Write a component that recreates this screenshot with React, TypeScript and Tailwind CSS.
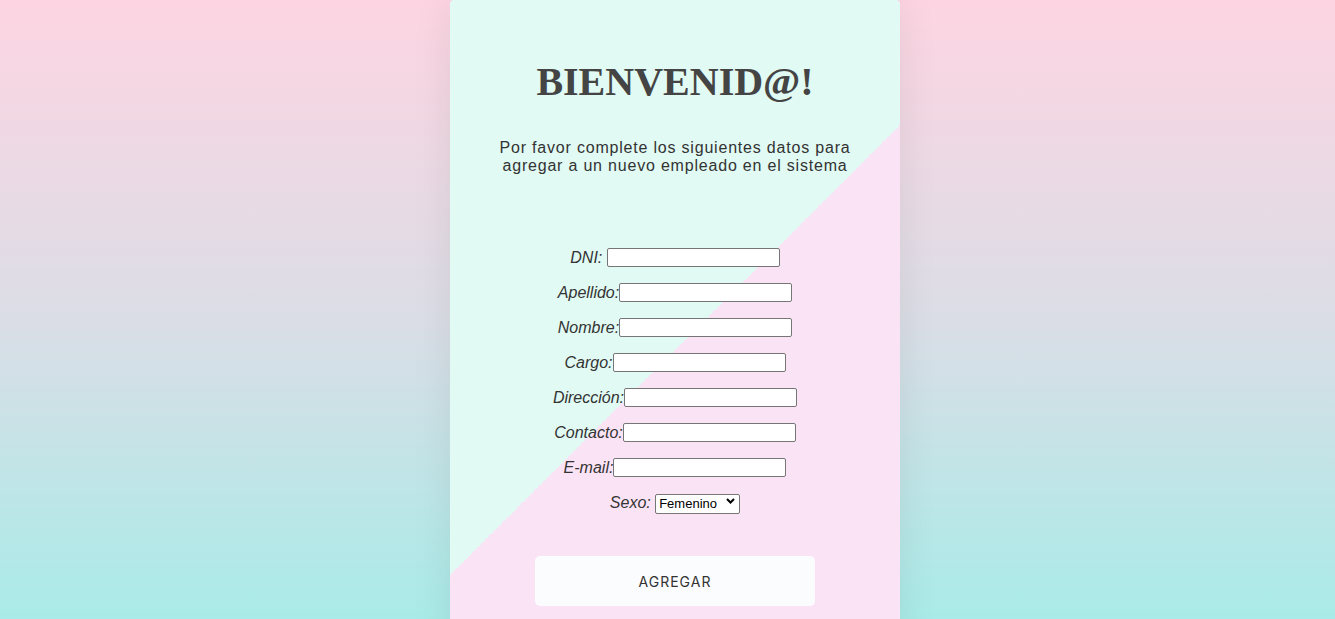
import React from "react";

const fields = [
  { label: "DNI: ", name: "dni" },
  { label: "Apellido:", name: "apellido" },
  { label: "Nombre:", name: "nombre" },
  { label: "Cargo:", name: "cargo" },
  { label: "Dirección:", name: "direccion" },
  { label: "Contacto:", name: "contacto" },
  { label: "E-mail:", name: "email" },
];

export default function App() {
  return (
    <div className="h-[619px] w-full overflow-hidden bg-[linear-gradient(180deg,#fdd5e2_0%,#dcdde6_50%,#a9ebe8_100%)] pl-[15px] flex justify-center">
      <div className="w-[450px] h-[700px] shrink-0 rounded-t-[4px] bg-[linear-gradient(135deg,#e1faf3_50%,#fbe3f6_50%)] shadow-[0_0_40px_rgba(0,0,0,0.08)] flex flex-col items-center pt-[59px]">
        <h1 className="text-[40px] leading-[46px] font-bold text-[#444444] font-['Liberation_Serif',serif]">
          BIENVENID@!
        </h1>
        <p className="mt-[34px] text-[16px] leading-[18px] tracking-[0.8px] text-[#333333] text-center font-['Liberation_Sans',Arial,sans-serif]">
          Por favor complete los siguientes datos para
          <br />
          agregar a un nuevo empleado en el sistema
        </p>
        <form className="mt-[65px] flex flex-col items-center font-['Liberation_Sans',Arial,sans-serif]">
          {fields.map((f) => (
            <div key={f.name} className="h-[35px] flex items-center justify-center">
              <label htmlFor={f.name} className="italic text-[16px] text-[#333333] whitespace-pre">
                {f.label}
              </label>
              <input
                id={f.name}
                type="text"
                className="w-[173px] h-[19px] bg-white border border-[#767676] rounded-[2px]"
              />
            </div>
          ))}
          <div className="h-[35px] flex items-center justify-center">
            <label htmlFor="sexo" className="italic text-[16px] text-[#333333] whitespace-pre">
              {"Sexo: "}
            </label>
            <div className="relative">
              <select
                id="sexo"
                defaultValue="Femenino"
                className="appearance-none w-[85px] h-[20px] bg-white border border-[#767676] rounded-[2px] pl-[3px] text-[13px] leading-[18px] text-black font-['Liberation_Sans',Arial,sans-serif]"
              >
                <option>Femenino</option>
                <option>Masculino</option>
              </select>
              <svg
                className="absolute right-[5px] top-[7px] pointer-events-none"
                width="9"
                height="7"
                viewBox="0 0 9 7"
              >
                <path d="M1 1 L4.5 4.5 L8 1" fill="none" stroke="#000" strokeWidth="2" />
              </svg>
            </div>
          </div>
          <button
            type="button"
            className="mt-[36px] w-[280px] h-[50px] rounded-[5px] bg-[#fafcfe] text-[14px] tracking-[1px] uppercase text-[#333333] font-['Inter',sans-serif]"
          >
            Agregar
          </button>
        </form>
      </div>
    </div>
  );
}
